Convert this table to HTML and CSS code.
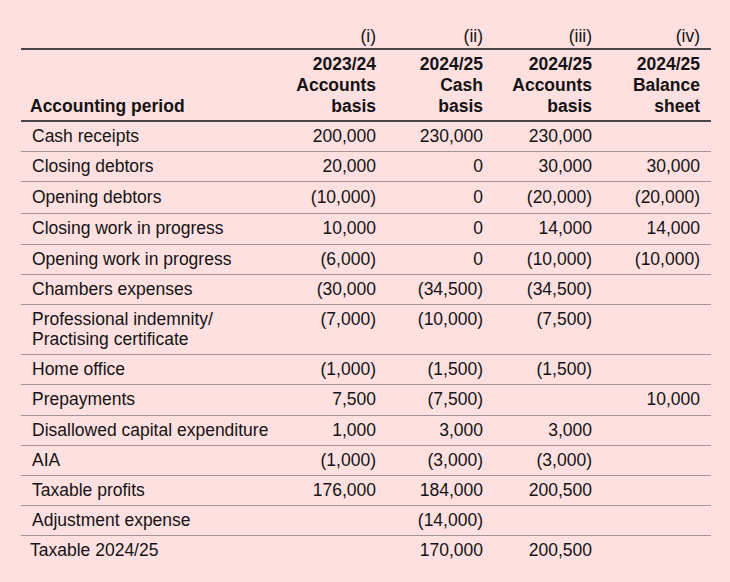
FILE: index.html
```html
<!DOCTYPE html>
<html lang="en">
<head>
<meta charset="utf-8">
<title>Accounting period</title>
<link rel="stylesheet" href="styles.css">
</head>
<body>
<div class="page">
  <table class="acct">
    <colgroup>
      <col class="c-label">
      <col class="c-num1">
      <col class="c-num2">
      <col class="c-num3">
      <col class="c-num4">
    </colgroup>
    <thead>
      <tr class="roman">
        <th></th>
        <th>(i)</th>
        <th>(ii)</th>
        <th>(iii)</th>
        <th>(iv)</th>
      </tr>
      <tr class="heads">
        <th class="label">Accounting period</th>
        <th>2023/24<br>Accounts<br>basis</th>
        <th>2024/25<br>Cash<br>basis</th>
        <th>2024/25<br>Accounts<br>basis</th>
        <th>2024/25<br>Balance<br>sheet</th>
      </tr>
    </thead>
    <tbody>
      <tr><td>Cash receipts</td><td>200,000</td><td>230,000</td><td>230,000</td><td></td></tr>
      <tr><td>Closing debtors</td><td>20,000</td><td>0</td><td>30,000</td><td>30,000</td></tr>
      <tr class="tall"><td>Opening debtors</td><td>(10,000)</td><td>0</td><td>(20,000)</td><td>(20,000)</td></tr>
      <tr><td>Closing work in progress</td><td>10,000</td><td>0</td><td>14,000</td><td>14,000</td></tr>
      <tr><td>Opening work in progress</td><td>(6,000)</td><td>0</td><td>(10,000)</td><td>(10,000)</td></tr>
      <tr><td>Chambers expenses</td><td>(30,000</td><td>(34,500)</td><td>(34,500)</td><td></td></tr>
      <tr><td>Professional indemnity/<br>Practising certificate</td><td>(7,000)</td><td>(10,000)</td><td>(7,500)</td><td></td></tr>
      <tr><td>Home office</td><td>(1,000)</td><td>(1,500)</td><td>(1,500)</td><td></td></tr>
      <tr><td>Prepayments</td><td>7,500</td><td>(7,500)</td><td></td><td>10,000</td></tr>
      <tr><td>Disallowed capital expenditure</td><td>1,000</td><td>3,000</td><td>3,000</td><td></td></tr>
      <tr><td>AIA</td><td>(1,000)</td><td>(3,000)</td><td>(3,000)</td><td></td></tr>
      <tr><td>Taxable profits</td><td>176,000</td><td>184,000</td><td>200,500</td><td></td></tr>
      <tr><td>Adjustment expense</td><td></td><td>(14,000)</td><td></td><td></td></tr>
      <tr class="last"><td class="total-label">Taxable 2024/25</td><td></td><td>170,000</td><td>200,500</td><td></td></tr>
    </tbody>
  </table>
</div>
</body>
</html>
```

FILE: styles.css
```css
html, body {
  margin: 0;
  padding: 0;
  background: #fee0e1;
}

.page {
  width: 730px;
  height: 582px;
  box-sizing: border-box;
  padding: 26px 19px 0 21px;
  font-family: "Liberation Sans", Arial, sans-serif;
  font-size: 17.5px;
  color: #151313;
}

.acct {
  width: 690px;
  border-collapse: collapse;
  table-layout: fixed;
}

.c-label { width: 258px; }
.c-num1 { width: 108px; }
.c-num2 { width: 107px; }
.c-num3 { width: 109px; }
.c-num4 { width: 108px; }

.acct th,
.acct td {
  padding: 0 11px 0 0;
  text-align: right;
  vertical-align: top;
  white-space: nowrap;
}

.acct .roman th {
  font-weight: normal;
  line-height: 20px;
  padding-bottom: 2px;
  border-bottom: 2px solid #4a4444;
}

.acct .heads th {
  font-weight: bold;
  line-height: 21px;
  padding-top: 3.5px;
  padding-bottom: 3.5px;
  vertical-align: bottom;
  border-bottom: 2px solid #4a4444;
}

.acct .heads th.label {
  text-align: left;
  padding-left: 9px;
  padding-right: 0;
}

.acct tbody td {
  line-height: 20px;
  padding-top: 4px;
  padding-bottom: 5.2px;
  border-bottom: 1px solid #a39595;
}

.acct tbody td:first-child {
  text-align: left;
  padding-left: 11px;
  padding-right: 0;
}

.acct tbody tr.tall td {
  padding-top: 5px;
  padding-bottom: 6px;
}

.acct tbody tr.last td {
  border-bottom: none;
}

.acct tbody td.total-label {
  padding-left: 9px;
}
```
